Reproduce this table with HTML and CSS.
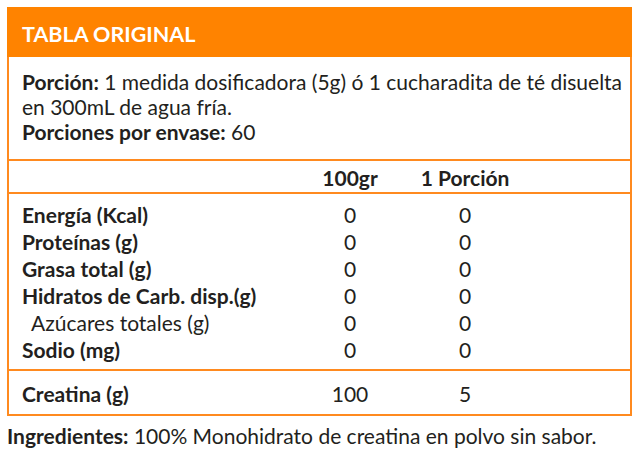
FILE: index.html
```html
<!DOCTYPE html>
<html lang="es">
<head>
<meta charset="utf-8">
<link rel="stylesheet" href="styles.css">
</head>
<body>
<div class="card">
  <div class="title">TABLA ORIGINAL</div>
  <div class="portion">
    <p><b>Porción:</b> 1 medida dosificadora (5g) ó 1 cucharadita de té disuelta<br>en 300mL de agua fría.</p>
    <p><b>Porciones por envase:</b> 60</p>
  </div>
  <div class="row head">
    <span></span><span class="v">100gr</span><span class="v">1 Porción</span>
  </div>
  <div class="group">
    <div class="row"><span class="l">Energía (Kcal)</span><span class="v">0</span><span class="v">0</span></div>
    <div class="row"><span class="l">Proteínas (g)</span><span class="v">0</span><span class="v">0</span></div>
    <div class="row"><span class="l">Grasa total (g)</span><span class="v">0</span><span class="v">0</span></div>
    <div class="row"><span class="l">Hidratos de Carb. disp.(g)</span><span class="v">0</span><span class="v">0</span></div>
    <div class="row"><span class="l sub">Azúcares totales (g)</span><span class="v">0</span><span class="v">0</span></div>
    <div class="row"><span class="l">Sodio (mg)</span><span class="v">0</span><span class="v">0</span></div>
  </div>
  <div class="row last"><span class="l">Creatina (g)</span><span class="v">100</span><span class="v">5</span></div>
</div>
<p class="ing"><b>Ingredientes:</b> 100% Monohidrato de creatina en polvo sin sabor.</p>
</body>
</html>
```

FILE: styles.css
```css
html, body {
  margin: 0;
  padding: 0;
  background: #fff;
}
body {
  font-family: Lato, "Liberation Sans", sans-serif;
  color: #231f20;
  font-size: 21px;
}
b { font-weight: 700; }
.card {
  margin: 7px 0 0 7px;
  width: 621px;
  border: 2px solid #ff8a1f;
  border-top: none;
}
.title {
  background: #ff8300;
  color: #fff;
  font-weight: 700;
  font-size: 21.5px;
  height: 50px;
  line-height: 54px;
  padding-left: 15px;
  margin: 0 -2px 0 -2px;
}
.portion {
  padding: 12px 0 15px 13px;
  border-bottom: 2px solid #ff8a1f;
}
.portion p {
  margin: 0;
  line-height: 25px;
  white-space: nowrap;
}
.row {
  display: grid;
  grid-template-columns: 301px 80px 150px 1fr;
  line-height: 27px;
}
.row .l { padding-left: 13px; font-weight: 700; white-space: nowrap; }
.row .l.sub { padding-left: 22px; font-weight: 400; }
.row .v { text-align: center; }
.head {
  height: 31px;
  line-height: 33px;
  font-weight: 700;
  border-bottom: 2px solid #ff8a1f;
}
.group {
  padding: 7px 0 6px;
  border-bottom: 2px solid #ff8a1f;
}
.last {
  height: 43px;
  line-height: 45px;
}
.ing {
  margin: 8px 0 0 7px;
  line-height: 24px;
}
```
